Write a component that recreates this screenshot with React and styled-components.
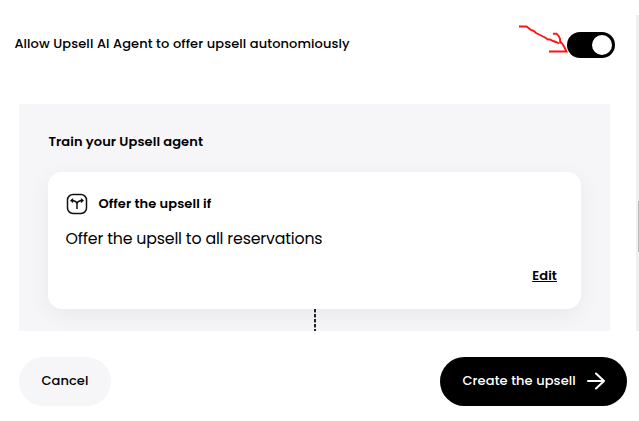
import React, { useState } from 'react';
import styled, { createGlobalStyle } from 'styled-components';

const GlobalStyle = createGlobalStyle`
  * {
    box-sizing: border-box;
  }

  body {
    margin: 0;
    background: #fff;
    color: #000;
    font-family: Poppins, Inter, sans-serif;
    overflow: hidden;
  }
`;

const Page = styled.div`
  display: flex;
  flex-direction: column;
  width: 639px;
  height: 421px;
`;

const ScrollArea = styled.div`
  display: flex;
  justify-content: space-between;
  height: 331px;
`;

const Content = styled.main`
  display: flex;
  flex-direction: column;
  width: 615px;
`;

const ScrollTrack = styled.div`
  width: 3px;
  margin-top: 15px;
  padding: 186px 0 0 2px;
  background: #f0f0f0;
`;

const ScrollThumb = styled.div`
  height: 51px;
  background: #bcbcbc;
`;

const SettingRow = styled.div`
  position: relative;
  display: flex;
  flex-shrink: 0;
  align-items: flex-start;
  justify-content: space-between;
  height: 26px;
  margin-top: 32px;
  padding-left: 14px;
`;

const Label = styled.span`
  padding: 2px 0 0 0.4px;
  font-size: 13px;
  line-height: 20px;
  font-weight: ${({ $weight }) => $weight || 500};
  letter-spacing: 0.09px;
  white-space: nowrap;
`;

const Toggle = styled.button`
  display: flex;
  justify-content: ${({ $on }) => ($on ? 'flex-end' : 'flex-start')};
  width: 48px;
  height: 26px;
  padding: 3px;
  border: 0;
  border-radius: 13px;
  background: ${({ $on }) => ($on ? '#000' : '#bbb')};
`;

const Knob = styled.span`
  width: 20px;
  height: 20px;
  border-radius: 50%;
  background: #fff;
`;

const Scribble = styled.svg`
  position: absolute;
  left: 517px;
  top: -8px;
  pointer-events: none;
`;

const Panel = styled.section`
  flex: 1;
  margin: 46px 5px 0 19px;
  padding: 26px 29px 0;
  background: #f6f6f9;
  overflow: hidden;
`;

const PanelTitle = styled.div`
  display: flex;
  height: 42px;
`;

const Card = styled.div`
  display: flex;
  flex-direction: column;
  height: 137px;
  padding: 21px 24px 0 17px;
  border-radius: 14px;
  background: #fff;
  box-shadow: 0 6px 22px rgba(0, 0, 0, 0.06);
`;

const CardHeader = styled.div`
  display: flex;
  align-items: center;
  gap: 10px;
  height: 22px;
  padding: 0 0 2px 1px;

  svg {
    position: relative;
    top: 1px;
  }
`;

const CardText = styled.p`
  margin: 12px 0 0;
  padding-left: 0.5px;
  font-size: 15.8px;
  line-height: 24px;
  letter-spacing: -0.18px;
`;

const EditLink = styled.a`
  align-self: flex-end;
  margin-top: 15px;
  font-size: 13px;
  line-height: 20px;
  font-weight: 600;
  letter-spacing: 0.1px;
  text-decoration: underline;
  text-decoration-thickness: 1px;
  text-underline-offset: 1px;
`;

const Connector = styled.div`
  width: 2px;
  height: 22px;
  margin-left: 266px;
  background: repeating-linear-gradient(#222 0 3px, #999 3px 4px, transparent 4px 5px);
`;

const Footer = styled.footer`
  display: flex;
  justify-content: space-between;
  padding: 26px 12px 0 19px;
`;

const Button = styled.button`
  display: flex;
  align-items: center;
  justify-content: space-between;
  width: ${({ $primary }) => ($primary ? 187 : 92)}px;
  height: 49px;
  padding: 0 22px 4px;
  border: 0;
  border-radius: 25px;
  background: ${({ $primary }) => ($primary ? '#000' : '#f6f6f9')};
  color: ${({ $primary }) => ($primary ? '#fff' : '#000')};
  font-family: inherit;

  svg {
    position: relative;
    top: 1px;
  }
`;

function SplitIcon() {
  return (
    <svg width="22" height="22" viewBox="0 0 22 22" fill="none" stroke="#111" strokeWidth="1.5">
      <rect x="1.5" y="1.5" width="19" height="19" rx="5.5" />
      <path d="M11 16v-5C11 8.8 9 7.6 5 7.6M11 11C11 8.8 13 7.6 17 7.6" />
      <path d="M4.2 7.6L7 5.4v4.4zM17.8 7.6L15 5.4v4.4z" fill="#111" strokeWidth="0.4" />
    </svg>
  );
}

function ArrowIcon() {
  return (
    <svg width="18" height="18" viewBox="0 0 18 18" fill="none" stroke="#fff" strokeWidth="2" strokeLinecap="round" strokeLinejoin="round">
      <path d="M1 9h16M9 1.5L17 9l-8 7.5" />
    </svg>
  );
}

function App() {
  const [autonomous, setAutonomous] = useState(true);

  return (
    <>
      <GlobalStyle />
      <Page>
        <ScrollArea>
          <Content>
            <SettingRow>
              <Label>Allow Upsell AI Agent to offer upsell autonomiously</Label>
              <Toggle $on={autonomous} onClick={() => setAutonomous(!autonomous)}>
                <Knob />
              </Toggle>
              <Scribble width="52" height="32" viewBox="517 24 52 32" fill="none" stroke="#ff1414" strokeWidth="1.9">
                <path d="M519 26.5h7.5l2 1.5 2.5 2 3 1 2 2 3 1.5 3 1.5 3 1.5 3 2h2l3 1.5 3 1 3 1.5" />
                <path d="M553 33.7h3.5l2 2 1.5 3 .3 5M560 41l2.5 3 2 3.5 2 4H549" />
              </Scribble>
            </SettingRow>
            <Panel>
              <PanelTitle>
                <Label $weight={600}>Train your Upsell agent</Label>
              </PanelTitle>
              <Card>
                <CardHeader>
                  <SplitIcon />
                  <Label $weight={600}>Offer the upsell if</Label>
                </CardHeader>
                <CardText>Offer the upsell to all reservations</CardText>
                <EditLink>Edit</EditLink>
              </Card>
              <Connector />
            </Panel>
          </Content>
          <ScrollTrack>
            <ScrollThumb />
          </ScrollTrack>
        </ScrollArea>
        <Footer>
          <Button>
            <Label>Cancel</Label>
          </Button>
          <Button $primary>
            <Label>Create the upsell</Label>
            <ArrowIcon />
          </Button>
        </Footer>
      </Page>
    </>
  );
}

export default App;
